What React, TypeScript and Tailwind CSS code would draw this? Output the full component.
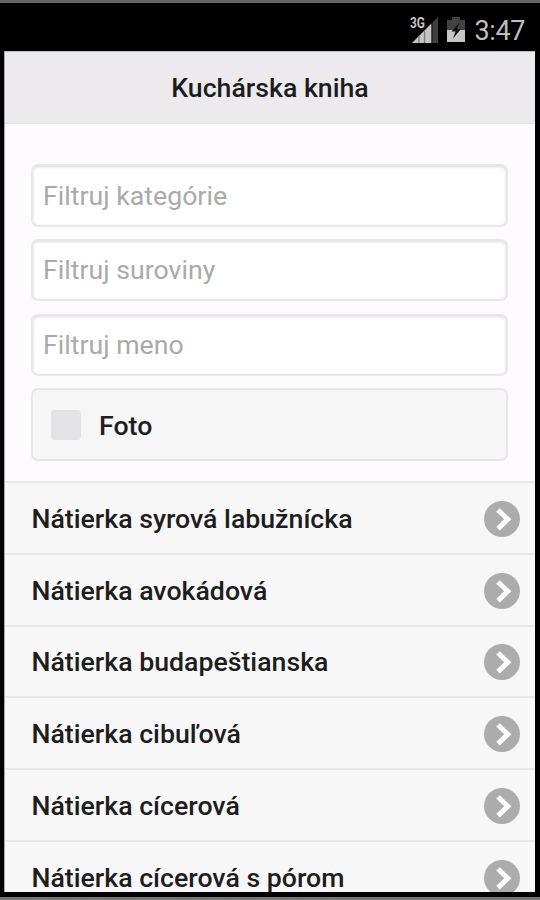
interface Recipe {
  name: string;
  height: string;
}

const filters = [
  { placeholder: "Filtruj kategórie", className: "h-[63px]" },
  { placeholder: "Filtruj suroviny", className: "h-[62px] mt-3" },
  { placeholder: "Filtruj meno", className: "h-[62px] mt-[13px]" },
];

const recipes: Recipe[] = [
  { name: "Nátierka syrová labužnícka", height: "h-[72px]" },
  { name: "Nátierka avokádová", height: "h-[72px]" },
  { name: "Nátierka budapeštianska", height: "h-[71px]" },
  { name: "Nátierka cibuľová", height: "h-[72px]" },
  { name: "Nátierka cícerová", height: "h-[72px]" },
  { name: "Nátierka cícerová s pórom", height: "h-[72px]" },
];

function SignalIcon() {
  return (
    <svg width="30" height="28" viewBox="0 0 30 28" className="shrink-0">
      <path d="M2 27 L28 1 V27 Z" fill="#3f3f3f" />
      <path d="M2 27 L21.5 7.5 V27 Z" fill="#c4c4c4" />
      <path d="M9 20V27M14.5 15V27" stroke="#777" strokeWidth="1.2" />
      <path d="M22 7V27" stroke="#111" strokeWidth="1" />
      <text
        x="0"
        y="11.5"
        textLength="15"
        lengthAdjust="spacingAndGlyphs"
        fontFamily="Roboto, sans-serif"
        fontSize="14.5"
        fontWeight="700"
        fill="#c4c4c4"
        stroke="#000"
        strokeWidth="2.5"
        paintOrder="stroke"
      >
        3G
      </text>
    </svg>
  );
}

function BatteryIcon() {
  return (
    <svg width="18" height="26" viewBox="0 0 18 26" className="shrink-0">
      <path d="M5 0H13V3H18V13H0V3H5Z" fill="#424242" />
      <path d="M0 13H18V25H0Z" fill="#c6c6c6" />
      <path d="M12.5 5.5L4.5 14.5H8.5L6 21.5L14 12H10Z" fill="#111" />
    </svg>
  );
}

function StatusBar() {
  return (
    <div className="h-12 shrink-0 flex items-center justify-end pr-[15px] pt-1.5">
      <SignalIcon />
      <span className="ml-[7px] flex">
        <BatteryIcon />
      </span>
      <span className="ml-[10px] pt-0.5 text-[27px] leading-none text-[#bebebe] tracking-[-0.4px]">3:47</span>
    </div>
  );
}

function ArrowIcon() {
  return (
    <svg width="36" height="36" viewBox="0 0 36 36" className="shrink-0">
      <circle cx="18" cy="18" r="18" fill="#acacac" />
      <path d="M14 9L23.8 18.3L14 27.6" fill="none" stroke="#fff" strokeWidth="5" />
    </svg>
  );
}

export default function App() {
  return (
    <div className="w-[540px] h-[900px] overflow-hidden flex flex-col bg-black border-t-[3px] border-b-[3px] border-t-[#666] border-b-[#777] font-[Roboto,sans-serif] text-[#1d1d1d]">
      <StatusBar />

      <div className="h-[841px] shrink-0 ml-1 mr-[5px] border-l border-[#aaa] bg-[#fdfbfe] overflow-hidden flex flex-col">
        <header className="h-[73px] shrink-0 bg-[#eceaed] border-t border-t-[#bbb] border-b border-b-[#e2e0e3] flex items-center justify-center">
          <h1 className="text-[26.7px] leading-8 font-medium">Kuchárska kniha</h1>
        </header>

        {/* Filters */}
        <div className="shrink-0 pt-10 pb-5 pl-[26px] pr-[27px]">
          {filters.map((filter) => (
            <input
              key={filter.placeholder}
              type="text"
              placeholder={filter.placeholder}
              className={`block w-full rounded-[7px] bg-white border-2 border-[#e8e6e9] px-[10px] text-[26.7px] outline-none placeholder:text-[#aaa] placeholder:opacity-100 shadow-[inset_0_1px_3px_rgba(0,0,0,0.15)] ${filter.className}`}
            />
          ))}
          <label className="mt-3 h-[73px] rounded-[7px] bg-[#f6f6f6] border-2 border-[#e8e6e9] flex items-center pl-[18px]">
            <span className="w-[30px] h-[30px] rounded bg-[#e3e2e4]" />
            <span className="ml-[18px] pt-0.5 text-[26.7px] leading-8 font-medium">Foto</span>
          </label>
        </div>

        {/* Recipes */}
        <ul className="shrink-0 bg-[#f7f7f7]">
          {recipes.map((recipe) => (
            <li
              key={recipe.name}
              className={`flex items-center justify-between border-t-2 border-[#e9e8e9] pt-px pl-[26.5px] pr-[15px] ${recipe.height}`}
            >
              <span className="text-[26.7px] leading-8 font-medium whitespace-nowrap">{recipe.name}</span>
              <ArrowIcon />
            </li>
          ))}
        </ul>
      </div>
    </div>
  );
}
